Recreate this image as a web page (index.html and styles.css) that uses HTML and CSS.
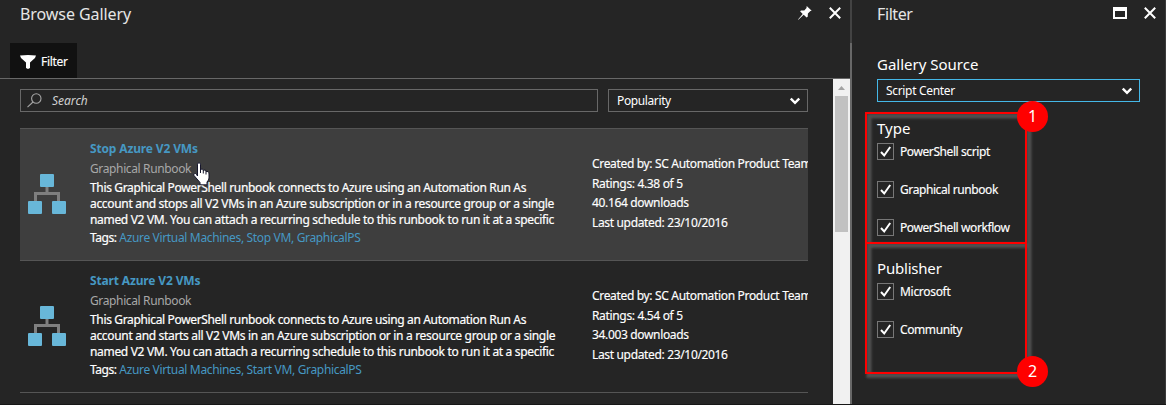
FILE: index.html
```html
<!DOCTYPE html>
<html lang="en">
<head>
<meta charset="utf-8">
<title>Browse Gallery</title>
<link rel="stylesheet" href="styles.css">
</head>
<body>
<svg class="defs" width="0" height="0" aria-hidden="true">
  <symbol id="tree" viewBox="0 0 38 40">
    <path d="M19 12v8M7.500 28v-8.500h23V28" fill="none" stroke="#7f7f7f" stroke-width="3"/>
    <g fill="#68b7d9"><rect x="12" y="0" width="14" height="13" rx="1"/><rect x="0" y="27" width="14" height="13" rx="1"/><rect x="24" y="27" width="14" height="13" rx="1"/></g>
  </symbol>
  <symbol id="close" viewBox="0 0 12 12"><path d="M.8.8l10.400 10.400M11.200.8L.8 11.200" stroke="#fff" stroke-width="2"/></symbol>
  <symbol id="chevron" viewBox="0 0 10 8"><path d="M.8 1.500L5 5.800 9.200 1.500" fill="none" stroke="#fff" stroke-width="2.400"/></symbol>
  <symbol id="check" viewBox="0 0 15 15"><path d="M3 8l3.200 3.500 6-8.500" fill="none" stroke="#fff" stroke-width="2"/></symbol>
</svg>
<div class="portal">
  <main class="blade gallery">
    <header class="head">
      <h1 class="title browse">Browse Gallery</h1>
      <svg class="pin" width="14" height="14" viewBox="0 0 14 14"><path fill="#fff" d="M8.700.1L13.700 4.700 12.400 5.100 9.900 7.600 9.700 10.700 8.600 11.400 5.700 8.800.4 13.800 0 13.500 4.700 7.900 2.100 5.300 3.100 4.600 6.300 4.500 8.500 2.100Z"/></svg>
      <svg class="x" width="12" height="12"><use href="#close"/></svg>
    </header>
    <div class="toolbar">
      <div class="tab"><svg width="16" height="14" viewBox="0 0 16 14"><path fill="#fff" d="M0 .5Q8-.5 16 .5L15 3 10 7.500V13l-2 1-2-1V7.500L1 3Z"/></svg><span class="tab-label">Filter</span></div>
    </div>
    <div class="body">
      <div class="content">
        <div class="controls">
          <div class="search"><svg width="15" height="15" viewBox="0 0 15 15" fill="none" stroke="#a5a5a5" stroke-width="1.100"><circle cx="9.300" cy="5.500" r="4.700"/><path d="M6 9L.5 14.200"/></svg><em class="placeholder">Search</em></div>
          <div class="select sort"><span class="popularity">Popularity</span><svg width="10" height="8"><use href="#chevron"/></svg></div>
        </div>
        <article class="row hover">
          <svg class="tree" width="38" height="40"><use href="#tree"/></svg>
          <div class="info">
            <h2 class="name stop">Stop Azure V2 VMs</h2>
            <div class="kind">Graphical Runbook</div>
            <p class="desc"><span class="l1">This Graphical PowerShell runbook connects to Azure using an Automation Run As</span><br><span class="l2">account and stops all V2 VMs in an Azure subscription or in a resource group or a single</span><br><span class="l3">named V2 VM. You can attach a recurring schedule to this runbook to run it at a specific</span></p>
            <div class="tags"><span class="taglabel">Tags:</span> <span class="taglist">Azure Virtual Machines, Stop VM, GraphicalPS</span></div>
          </div>
          <div class="meta"><div class="m1">Created by: SC Automation Product Team</div><div class="m2">Ratings: 4.38 of 5</div><div class="m3">40.164 downloads</div><div class="m4">Last updated: 23/10/2016</div></div>
        </article>
        <article class="row">
          <svg class="tree" width="38" height="40"><use href="#tree"/></svg>
          <div class="info">
            <h2 class="name start">Start Azure V2 VMs</h2>
            <div class="kind">Graphical Runbook</div>
            <p class="desc"><span class="l1">This Graphical PowerShell runbook connects to Azure using an Automation Run As</span><br><span class="l2">account and starts all V2 VMs in an Azure subscription or in a resource group or a single</span><br><span class="l3">named V2 VM. You can attach a recurring schedule to this runbook to run it at a specific</span></p>
            <div class="tags"><span class="taglabel">Tags:</span> <span class="taglist">Azure Virtual Machines, Start VM, GraphicalPS</span></div>
          </div>
          <div class="meta"><div class="m1">Created by: SC Automation Product Team</div><div class="m2">Ratings: 4.54 of 5</div><div class="m3">34.003 downloads</div><div class="m4">Last updated: 23/10/2016</div></div>
        </article>
      </div>
      <div class="scrollbar"><svg width="17" height="17" viewBox="0 0 17 17"><path fill="#a3a3a3" d="M5 11L8.500 7 12 11Z"/></svg><div class="thumb"></div></div>
    </div>
  </main>
  <aside class="blade filter">
    <header class="head">
      <h1 class="title filter-title">Filter</h1>
      <svg class="max" width="14" height="12" viewBox="0 0 14 12"><path fill="#fff" fill-rule="evenodd" d="M0 0h14v12H0ZM2 4v6h10V4Z"/></svg>
      <svg class="x" width="12" height="12"><use href="#close"/></svg>
    </header>
    <section class="options">
      <h3 class="group source">Gallery Source</h3>
      <div class="select center"><span class="script-center">Script Center</span><svg width="10" height="8"><use href="#chevron"/></svg></div>
      <h3 class="group type">Type</h3>
      <div class="option"><svg class="box"><use href="#check"/></svg><span class="c1">PowerShell script</span></div>
      <div class="option"><svg class="box"><use href="#check"/></svg><span class="c2">Graphical runbook</span></div>
      <div class="option"><svg class="box"><use href="#check"/></svg><span class="c3">PowerShell workflow</span></div>
      <h3 class="group publisher">Publisher</h3>
      <div class="option"><svg class="box"><use href="#check"/></svg><span class="c4">Microsoft</span></div>
      <div class="option"><svg class="box"><use href="#check"/></svg><span class="c5">Community</span></div>
    </section>
  </aside>
</div>
<svg class="outline" width="200" height="290" viewBox="0 0 200 290">
  <defs><filter id="soft" x="-10%" y="-10%" width="120%" height="120%"><feGaussianBlur stdDeviation="0.900"/></filter></defs>
  <path d="M9 16H169V275.500H9ZM9 145.500H169" fill="none" stroke="#505050" stroke-width="5" filter="url(#soft)"/>
  <path d="M6 13H166V273H6ZM6 143H166" fill="none" stroke="#f00" stroke-width="2"/>
</svg>
<div class="badge one">1</div>
<div class="badge two">2</div>
<svg class="cursor" width="17" height="24" viewBox="0 0 17 24"><path fill="#fff" stroke="#15152a" stroke-width="1" d="M4.500 14V2.200Q4.500.8 6 .8T7.500 2.200V8Q8 6.800 9.300 7.200T10.300 8.800Q11 7.700 12.200 8.200T13 9.800Q13.800 9 15 9.700T16 12V16Q16 18 14 20V22.800H7V20.500L1 13.500Q.4 12.300 1.500 11.700T3.400 12.300Z"/><path d="M7.500 7v4M10.300 8.500v3M13 9.500v3" stroke="#15152a"/></svg>
</body>
</html>
```

FILE: styles.css
```css
* { box-sizing: border-box; }
body { margin: 0; position: relative; width: 1166px; height: 405px; overflow: hidden; background: #252525; color: #fff; font: 12px/16px "Noto Sans", "Open Sans", sans-serif; white-space: nowrap; }
h1, h2, h3, p { margin: 0; font-weight: 400; }
svg { display: block; flex: none; }
.defs { position: absolute; }
.portal { display: flex; height: 405px; border-bottom: 1px solid #171717; }
.gallery { width: 852px; border-style: solid; border-width: 0 2px 0 0; border-image: linear-gradient(#434343 43px, #686868 43px) 0 2 0 0; }
.head { height: 43px; display: flex; align-items: flex-start; padding: 0 9px 0 20px; }
.title { font-size: 16px; line-height: 22px; padding-top: 3px; margin-right: auto; color: #e5e5e5; }
.browse { letter-spacing: -.07px; }
.filter-title { letter-spacing: -.4px; }
.x { margin-top: 7px; }
.pin { margin: 6px 17px 0 0; }
.toolbar { height: 36px; border-bottom: 1px solid #686868; padding-left: 10px; }
.tab { width: 67px; height: 35px; background: #111; display: flex; align-items: center; padding: 3px 0 0 10px; }
.tab svg { margin-top: -1px; }
.tab-label { margin-left: 5px; letter-spacing: -.3px; -webkit-text-stroke: .15px; }
.body { display: flex; height: 325px; }
.content { width: 833px; padding: 10px 25px 0 20px; }
.controls { display: flex; gap: 10px; height: 39px; }
.search { width: 578px; height: 23px; border: 1px solid #686868; display: flex; align-items: center; padding-left: 6px; }
.placeholder { margin-left: 10px; color: #d0d0d0; }
.select { height: 23px; border: 1px solid #686868; display: flex; align-items: center; justify-content: space-between; padding: 0 7px 0 8px; }
.sort { width: 200px; }
.popularity { letter-spacing: -.38px; }
.row { height: 132px; border-top: 1px solid #555; display: flex; width: 788px; overflow: hidden; }
.row + .row { height: 133px; border-bottom: 1px solid #555; }
.hover { background: #3e3e3e; }
.tree { margin: 45px 24px 0 8px; }
.info { flex: none; width: 502px; padding-top: 11px; }
.name { font-size: 12px; line-height: 18px; font-weight: 700; color: #4698c3; letter-spacing: -.15px; }
.kind { line-height: 16px; margin-top: 3px; color: #a8a8a8; letter-spacing: -.37px; }
.desc { margin-top: 3px; line-height: 16px; letter-spacing: -.32px; -webkit-text-stroke: .2px; }
.l1 { letter-spacing: -.35px; }
.tags { margin-top: 2px; line-height: 16px; letter-spacing: -.34px; }
.taglabel { -webkit-text-stroke: .2px; letter-spacing: -.45px; }
.taglist { color: #4698c3; }
.meta { flex: none; padding-top: 25px; line-height: 19.6px; letter-spacing: -.34px; -webkit-text-stroke: .15px; }
.m1 { letter-spacing: -.33px; }
.scrollbar { width: 17px; background: #f1f1f1; }
.thumb { height: 136px; margin: 0 2px; background: #c1c1c1; }
.filter { width: 314px; border-right: 1px solid #3b3b3b; }
.filter .head { padding: 0 9px 0 25px; }
.max { margin: 7px 17px 0 0; }
.options { padding: 10px 0 0 25px; }
.group { font-size: 15px; line-height: 22px; }
.center { width: 263px; margin-top: 4px; border-color: #45b8e8; }
.script-center { letter-spacing: -.32px; }
.type { margin-top: 15px; }
.option { display: flex; height: 17px; align-items: center; margin-bottom: 21px; letter-spacing: -.41px; -webkit-text-stroke: .15px; }
.type + .option { margin-top: 4px; }
.publisher + .option { margin-top: 4px; }
.box { width: 17px; height: 17px; border: 1px solid #777; margin-right: 6px; }
.box use { width: 15px; height: 15px; }
.c4 { letter-spacing: -.3px; }
.publisher { letter-spacing: -.2px; }
.outline { position: absolute; left: 860px; top: 100px; }
.badge { position: absolute; left: 1017px; width: 31px; height: 31px; border-radius: 50%; background: #f00; text-align: center; font-size: 16px; line-height: 30px; }
.one { top: 101px; }
.two { top: 356px; }
.cursor { position: absolute; left: 193px; top: 162px; }
```
